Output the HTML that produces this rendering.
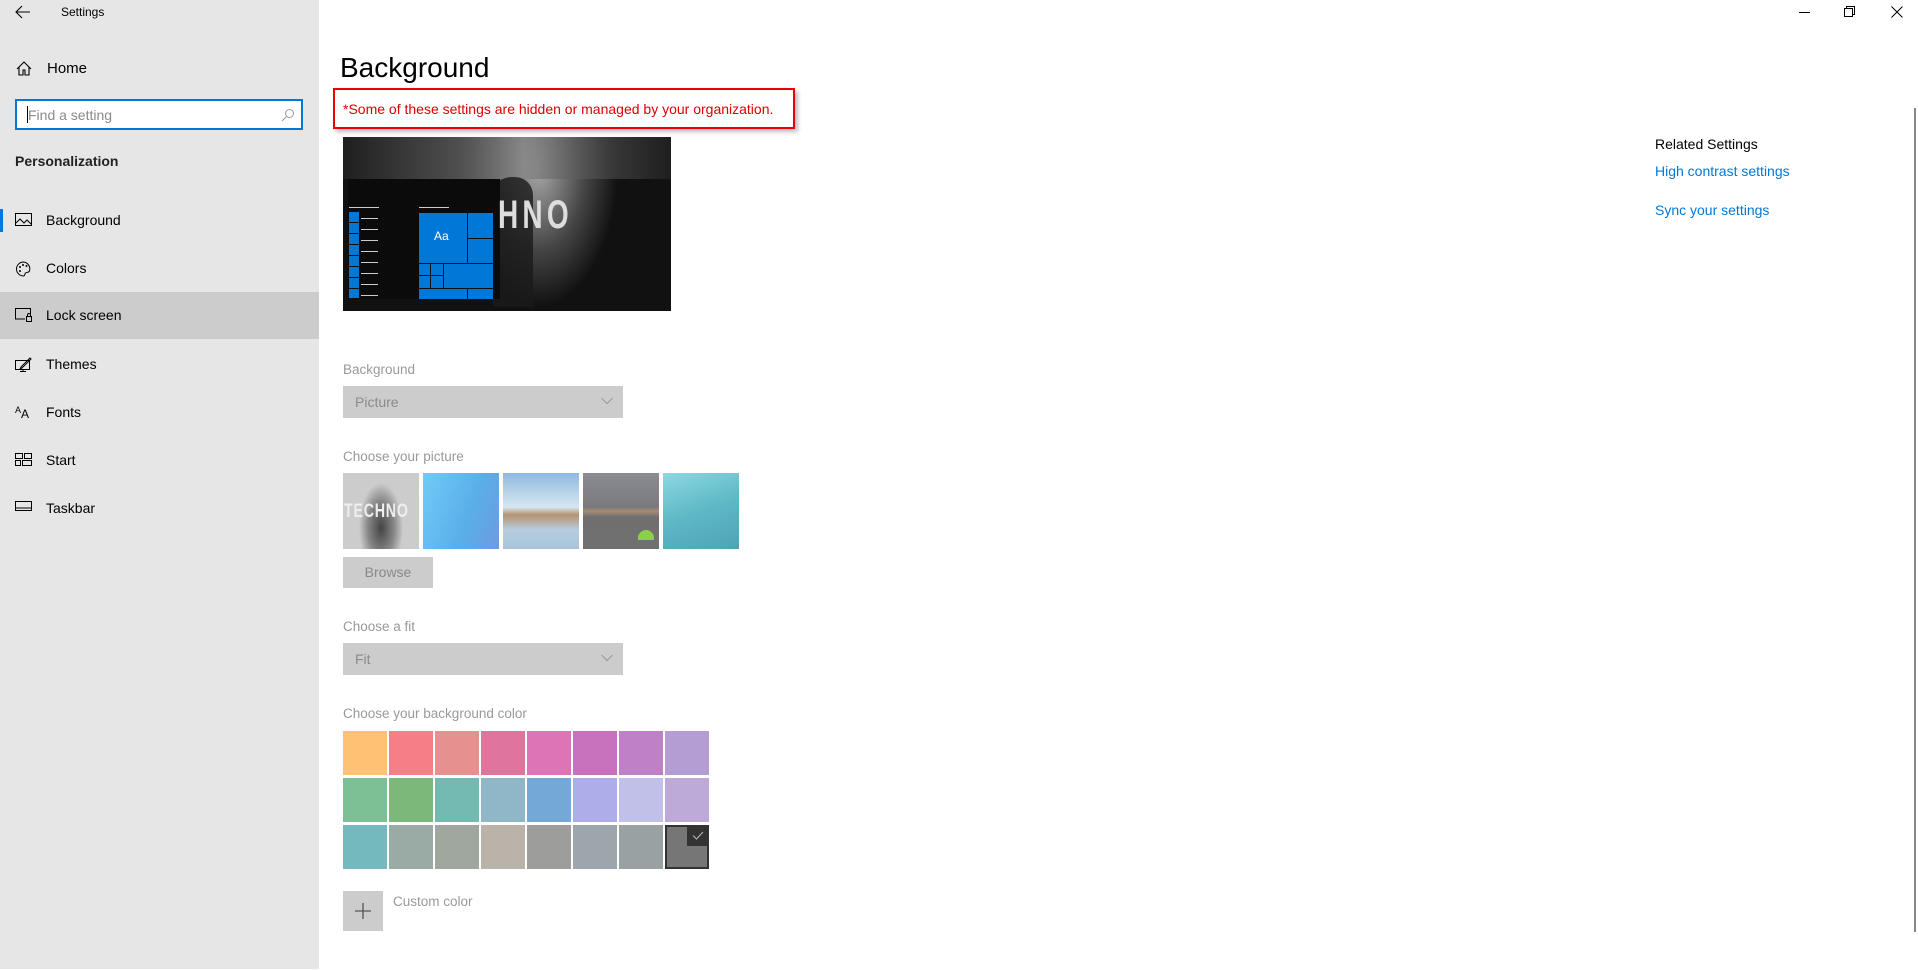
<!DOCTYPE html>
<html><head><meta charset="utf-8"><style>
*{margin:0;padding:0;box-sizing:border-box}
body{width:1918px;height:970px;position:relative;background:#fff;font-family:"Liberation Sans",sans-serif;overflow:hidden}
.a{position:absolute;white-space:nowrap}
#side{position:absolute;left:0;top:0;width:319px;height:969px;background:#e6e6e6}
.it{position:absolute;left:0;width:319px;height:47px;font-size:14px;color:#000}
.it span{position:absolute;left:46px;top:15px}
.it svg{position:absolute;left:15px;top:16px}
.lbl{font-size:13.5px;color:#999}
.dd{position:absolute;background:#ccc;width:280px;height:32px;font-size:14px;color:#8a8a8a}
.dd span{position:absolute;left:12px;top:8px}
.dd svg{position:absolute;right:10px;top:11px}
.sw{position:absolute;width:44px;height:44px}
.lk{color:#0078d7;font-size:14px}
</style></head><body>
<div id="side">
 <svg class="a" style="left:15px;top:5px" width="16" height="14" viewBox="0 0 16 14"><path d="M15 7H2M7 1L1 7l6 6" stroke="#000" fill="none" stroke-width="1.1"/></svg>
 <div class="a" style="left:61px;top:5px;font-size:12px">Settings</div>
 <svg class="a" style="left:16px;top:61px" width="16" height="15" viewBox="0 0 16 15"><path d="M1 8L8 1l7 7M3 6v8h4v-5h2v5h4V6" stroke="#000" fill="none" stroke-width="1.1"/></svg>
 <div class="a" style="left:47px;top:60px;font-size:15px">Home</div>
 <div class="a" style="left:15px;top:99px;width:288px;height:31px;background:#fff;border:2px solid #0078d7"></div>
 <div class="a" style="left:27px;top:106px;width:1px;height:17px;background:#000"></div>
 <div class="a" style="left:28px;top:107px;font-size:14px;color:#8a8a8a">Find a setting</div>
 <svg class="a" style="left:281px;top:108px" width="14" height="14" viewBox="0 0 14 14"><circle cx="8.5" cy="5.5" r="4" stroke="#999" fill="none"/><path d="M5.5 8.5L1 13" stroke="#999"/></svg>
 <div class="a" style="left:15px;top:153px;font-size:14px;font-weight:bold;color:#222">Personalization</div>
 <div class="a" style="left:0;top:209px;width:3px;height:23px;background:#0078d7"></div>
 <div class="it" style="top:197px"><svg width="17" height="13" viewBox="0 0 17 13"><rect x=".5" y=".5" width="16" height="12" stroke="#000" fill="none"/><path d="M1 10l4-4 4 4 3-3 4 4" stroke="#000" fill="none"/></svg><span>Background</span></div>
 <div class="it" style="top:245px"><svg width="17" height="16" viewBox="0 0 17 16"><path d="M8.5 1a7 7 0 1 0 0 14c1.5 0 1-2 2-3s3 0 4-2a7 7 0 0 0-6-9z" stroke="#000" fill="none"/><circle cx="5" cy="6" r="1"/><circle cx="8" cy="4" r="1"/><circle cx="11.5" cy="5" r="1"/><circle cx="5" cy="10" r="1"/></svg><span>Colors</span></div>
 <div class="it" style="top:292px;background:#ccc"><svg width="17" height="14" viewBox="0 0 17 14"><path d="M10 11H.5V.5h15V6" stroke="#000" fill="none"/><rect x="11.5" y="8.5" width="5" height="5" stroke="#000" fill="none"/><path d="M12.5 8.5V7a1.5 1.5 0 0 1 3 0v1.5" stroke="#000" fill="none"/></svg><span>Lock screen</span></div>
 <div class="it" style="top:341px"><svg width="17" height="15" viewBox="0 0 17 15"><rect x=".5" y="3.5" width="14" height="9" stroke="#000" fill="none"/><path d="M5 14.5h6M8 12.5v2M6 10l9-9 1 1-9 9-2 1z" stroke="#000" fill="none"/></svg><span>Themes</span></div>
 <div class="it" style="top:389px"><svg width="17" height="14" viewBox="0 0 17 14"><text x="0" y="8" font-size="9" font-family="Liberation Sans">A</text><text x="6" y="13" font-size="12" font-family="Liberation Sans">A</text></svg><span>Fonts</span></div>
 <div class="it" style="top:437px"><svg width="17" height="13" viewBox="0 0 17 13"><rect x=".5" y=".5" width="7" height="5" stroke="#000" fill="none"/><rect x="9.5" y=".5" width="7" height="5" stroke="#000" fill="none"/><rect x=".5" y="7.5" width="5" height="5" stroke="#000" fill="none"/><rect x="7.5" y="7.5" width="9" height="5" stroke="#000" fill="none"/></svg><span>Start</span></div>
 <div class="it" style="top:485px"><svg width="17" height="11" viewBox="0 0 17 11"><rect x=".5" y=".5" width="16" height="9" stroke="#000" fill="none"/><path d="M1 7h15" stroke="#000"/></svg><span>Taskbar</span></div>
</div>

<div class="a" style="left:1799px;top:12px;width:11px;height:1px;background:#000"></div>
<svg class="a" style="left:1844px;top:6px" width="12" height="12" viewBox="0 0 12 12"><rect x=".5" y="2.5" width="8" height="8" stroke="#000" fill="none"/><path d="M2.5 2.5V.5h8v8h-2" stroke="#000" fill="none"/></svg>
<svg class="a" style="left:1891px;top:6px" width="12" height="12" viewBox="0 0 12 12"><path d="M.5.5l11 11M11.5.5l-11 11" stroke="#000"/></svg>
<div class="a" style="left:1914px;top:108px;width:2px;height:824px;background:#888"></div>

<div class="a" style="left:340px;top:52px;font-size:28px;color:#000">Background</div>
<div class="a" style="left:333px;top:88px;width:462px;height:41px;border:2px solid #e00;box-shadow:3px 3px 4px rgba(0,0,0,.25)"></div>
<div class="a" style="left:343px;top:101px;font-size:14px;color:#d00">*Some of these settings are hidden or managed by your organization.</div>

<div class="a" style="left:343px;top:137px;width:328px;height:174px;background:radial-gradient(ellipse 80px 140px at 195px 30px,#aaa,#444 60%,#111),#111;overflow:hidden">
 <div class="a" style="left:0;top:0;width:328px;height:42px;background:linear-gradient(90deg,#222,#666 40%,#888 55%,#444 80%,#222);opacity:.8"></div>
 <div class="a" style="left:150px;top:40px;width:40px;height:130px;background:#1a1a1a;border-radius:18px 18px 0 0;opacity:.8"></div>
 <div class="a" style="left:5px;top:42px;width:152px;height:120px;background:#0b0b0b"></div>
 <div class="a" style="left:155px;top:56px;font-size:40px;font-weight:bold;color:#ddd;letter-spacing:6px;transform:scaleX(.7);transform-origin:left">HNO</div>
 <div class="a" style="left:6px;top:70px;width:30px;height:1px;background:#ccc"></div>
 <div class="a" style="left:6px;top:75px;width:10px;height:86px;background:repeating-linear-gradient(#0078d7 0 10px,#111 10px 11px)"></div>
 <div class="a" style="left:18px;top:81px;width:17px;height:80px;background:repeating-linear-gradient(#ccc 0 1px,transparent 1px 11px)"></div>
 <div class="a" style="left:76px;top:70px;width:30px;height:1px;background:#ccc"></div>
 <div class="a" style="left:76px;top:76px;width:74px;height:86px;background:#0078d7"></div>
 <div class="a" style="left:124px;top:76px;width:1px;height:50px;background:#111"></div>
 <div class="a" style="left:124px;top:101px;width:26px;height:1px;background:#111"></div>
 <div class="a" style="left:76px;top:126px;width:74px;height:1px;background:#111"></div>
 <div class="a" style="left:76px;top:151px;width:74px;height:1px;background:#111"></div>
 <div class="a" style="left:100px;top:126px;width:1px;height:25px;background:#111"></div>
 <div class="a" style="left:87px;top:126px;width:1px;height:25px;background:#111"></div>
 <div class="a" style="left:76px;top:138px;width:24px;height:1px;background:#111"></div>
 <div class="a" style="left:124px;top:151px;width:1px;height:11px;background:#111"></div>
 <div class="a" style="left:91px;top:92px;font-size:12px;color:#fff">Aa</div>
</div>

<div class="a lbl" style="left:343px;top:362px">Background</div>
<div class="dd" style="left:343px;top:386px"><span>Picture</span><svg width="12" height="8" viewBox="0 0 12 8"><path d="M.5 1l5.5 5.5L11.5 1" stroke="#999" fill="none"/></svg></div>

<div class="a lbl" style="left:343px;top:449px">Choose your picture</div>
<div class="a" style="left:343px;top:473px;width:76px;height:76px;background:radial-gradient(ellipse 22px 45px at 38px 55px,#444,#888 60%,#ccc);overflow:hidden"><div class="a" style="left:1px;top:28px;font-size:19px;font-weight:bold;color:#eee;letter-spacing:1px;transform:scaleX(.75);transform-origin:left">TECHNO</div></div>
<div class="a" style="left:423px;top:473px;width:76px;height:76px;background:linear-gradient(110deg,#6fcbf7,#5aaee8 60%,#6d9be0)"></div>
<div class="a" style="left:503px;top:473px;width:76px;height:76px;background:linear-gradient(#8fb9e0,#d6e6f0 45%,#b59270 55%,#b7cde0 75%,#a8c3d9)"></div>
<div class="a" style="left:583px;top:473px;width:76px;height:76px;background:linear-gradient(#8b8b93,#7a7a7e 45%,#a98a70 50%,#6f6f6f 58%,#707070)"><div class="a" style="left:55px;top:57px;width:16px;height:10px;background:#8ad04a;border-radius:8px 8px 0 0"></div></div>
<div class="a" style="left:663px;top:473px;width:76px;height:76px;background:linear-gradient(160deg,#8dd8e3,#5eb8c5 50%,#4fa3b5)"></div>
<div class="a" style="left:343px;top:557px;width:90px;height:31px;background:#ccc;font-size:14px;color:#888;text-align:center;line-height:31px">Browse</div>

<div class="a lbl" style="left:343px;top:619px">Choose a fit</div>
<div class="dd" style="left:343px;top:643px"><span>Fit</span><svg width="12" height="8" viewBox="0 0 12 8"><path d="M.5 1l5.5 5.5L11.5 1" stroke="#999" fill="none"/></svg></div>

<div class="a lbl" style="left:343px;top:706px">Choose your background color</div>
<div id="sw"></div>
<script>
var c=[["#ffc174","#f47f86","#e69190","#df749e","#dd74b5","#c871bc","#bf80c7","#b39dd2"],
["#7dc096","#7db87b","#74bab2","#8fb7c7","#74a8d7","#adaee9","#c1c0e9","#bdaad8"],
["#74b9be","#9aaba5","#9fa79f","#b9b3a9","#9d9d9b","#9ea6ad","#9aa1a3","#767676"]];
var h="";for(var r=0;r<3;r++)for(var i=0;i<8;i++)h+='<div class="sw" style="left:'+(343+i*46)+'px;top:'+(731+r*47)+'px;background:'+c[r][i]+'"></div>';
document.getElementById("sw").outerHTML=h;
</script>
<div class="a" style="left:665px;top:825px;width:44px;height:44px;border:2px solid #333"></div>
<div class="a" style="left:687px;top:825px;width:22px;height:21px;background:#333"></div>
<svg class="a" style="left:692px;top:831px" width="12" height="9" viewBox="0 0 12 9"><path d="M1 4.5l3.5 3.5L11 1" stroke="#bbb" fill="none"/></svg>
<div class="a" style="left:343px;top:891px;width:40px;height:40px;background:#ccc"></div>
<svg class="a" style="left:353px;top:901px" width="20" height="20" viewBox="0 0 20 20"><path d="M10 2v16M2 10h16" stroke="#555" stroke-width="1.3"/></svg>
<div class="a lbl" style="left:393px;top:894px">Custom color</div>

<div class="a" style="left:1655px;top:136px;font-size:14px;color:#000">Related Settings</div>
<div class="a lk" style="left:1655px;top:163px">High contrast settings</div>
<div class="a lk" style="left:1655px;top:202px">Sync your settings</div>
</body></html>
